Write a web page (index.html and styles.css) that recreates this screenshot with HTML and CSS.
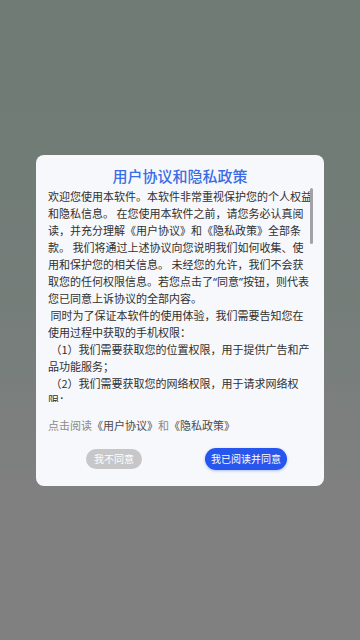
FILE: index.html
```html
<!DOCTYPE html>
<html lang="zh-CN">
<head>
<meta charset="utf-8">
<meta name="viewport" content="width=360, initial-scale=1">
<title>用户协议和隐私政策</title>
<link rel="stylesheet" href="styles.css">
</head>
<body>
<div class="screen">
  <div class="dialog">
    <h1 class="title">用户协议和隐私政策</h1>
    <div class="scroll-wrap">
      <div class="scroll">
        <p class="content">欢迎您使用本软件。本软件非常重视保护您的个人权益<br>和隐私信息。 在您使用本软件之前，请您务必认真阅<br>读，并充分理解《用户协议》和《隐私政策》全部条<br>款。 我们将通过上述协议向您说明我们如何收集、使<br>用和保护您的相关信息。 未经您的允许，我们不会获<br>取您的任何权限信息。若您点击了<span class="q">“</span>同意<span class="q">”</span>按钮，则代表<br>您已同意上诉协议的全部内容。<br>&nbsp;同时为了保证本软件的使用体验，我们需要告知您在<br>使用过程中获取的手机权限：<br>&nbsp;（1）我们需要获取您的位置权限，用于提供广告和产<br>品功能服务；<br>&nbsp;（2）我们需要获取您的网络权限，用于请求网络权<br>限：</p>
      </div>
      <div class="thumb"></div>
    </div>
    <p class="footer-note">点击阅读<span class="link">《用户协议》</span>和<span class="link">《隐私政策》</span></p>
    <div class="actions">
      <div class="cell"><button class="btn btn-disagree">我不同意</button></div>
      <div class="cell"><button class="btn btn-agree">我已阅读并同意</button></div>
    </div>
  </div>
</div>
</body>
</html>
```

FILE: styles.css
```css
* { box-sizing: border-box; }
html, body { margin: 0; padding: 0; }
body {
  font-family: "Noto Sans CJK SC", "Noto Sans", sans-serif;
}
.screen {
  width: 360px;
  height: 640px;
  display: flex;
  align-items: center;
  justify-content: center;
  background: linear-gradient(180deg, #6f7b74 0%, #727c77 30%, #777e7b 55%, #7e7f7f 70%, #808080 78%, #808080 100%);
}
.dialog {
  width: 288px;
  height: 331px;
  background: #f7f8fc;
  border-radius: 8px;
  padding: 10px 12px 15px;
  display: flex;
  flex-direction: column;
}
.title {
  margin: 0;
  height: 22px;
  line-height: 22px;
  font-size: 15px;
  font-weight: 500;
  color: #3a6de6;
  text-align: center;
}
.scroll-wrap {
  position: relative;
  height: 215px;
}
.scroll {
  height: 215px;
  overflow: hidden;
}
.content {
  margin: 0;
  padding-top: 1px;
  font-size: 11px;
  line-height: 17px;
  color: #303030;
  white-space: nowrap;
}
.q {
  font-family: "Noto Sans", "DejaVu Sans", sans-serif;
}
.thumb {
  position: absolute;
  right: -1px;
  top: 1px;
  width: 3px;
  height: 56px;
  border-radius: 2px;
  background: #a2a2a4;
}
.footer-note {
  margin: 15px 0 0;
  font-size: 11px;
  line-height: 17px;
  color: #8a8a8a;
}
.link { color: #4a4a4a; }
.actions {
  margin-top: 14px;
  height: 22px;
  display: flex;
  align-items: center;
}
.cell {
  flex: 1;
  display: flex;
  justify-content: center;
  align-items: center;
}
.btn {
  border: 0;
  margin: 0;
  font-family: "Noto Sans CJK SC", "Noto Sans", sans-serif;
  font-size: 10px;
  color: #ffffff;
  line-height: 1;
}
.btn-disagree {
  height: 20px;
  padding: 0 8px;
  border-radius: 10px;
  background: #c7c7c9;
}
.btn-agree {
  height: 22px;
  padding: 0 6px;
  border-radius: 11px;
  background: #2756ef;
  box-shadow: 0 1px 3px rgba(39, 86, 239, 0.35);
}
```
